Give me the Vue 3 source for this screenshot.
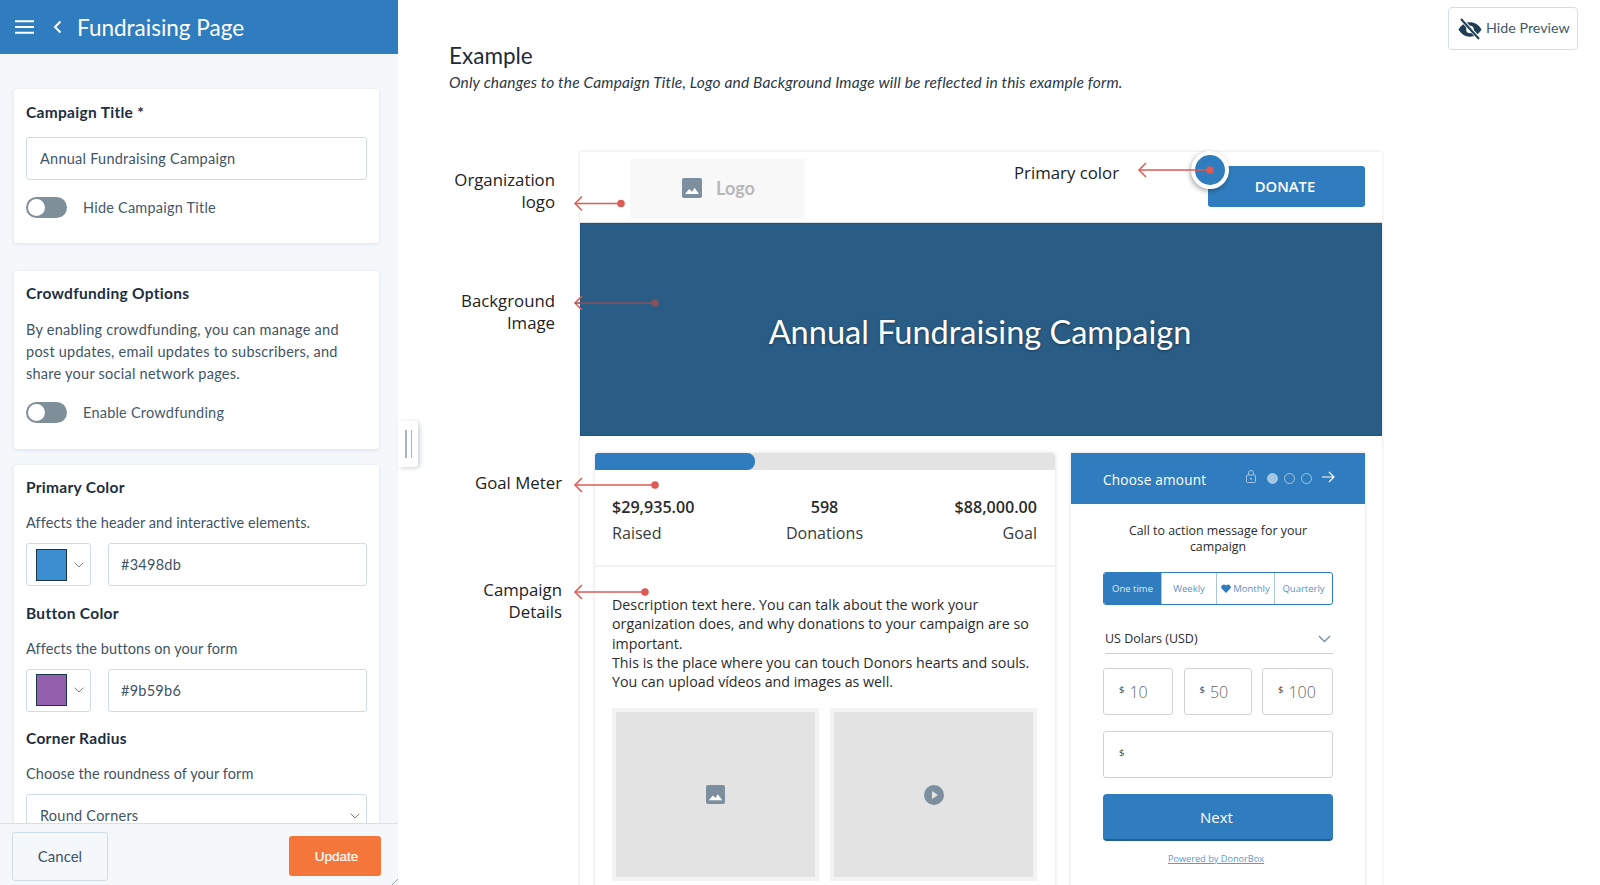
<template>
  <div class="page">
    <aside class="sidebar">
      <header class="side_head">
        <svg class="burger" width="19" height="14" viewBox="0 0 19 14"><path d="M0 1.2h19M0 7h19M0 12.800h19" stroke="#fff" stroke-width="2"/></svg>
        <svg class="back" width="9" height="14" viewBox="0 0 9 14"><path d="M7.500 1.500 2 7l5.500 5.500" fill="none" stroke="#fff" stroke-width="2"/></svg>
        <h1>Fundraising Page</h1>
      </header>

      <div class="side_scroll">
        <section class="card card_title">
          <h3>Campaign Title *</h3>
          <div class="input">Annual Fundraising Campaign</div>
          <div class="toggle_row"><span class="toggle"></span><span>Hide Campaign Title</span></div>
        </section>

        <section class="card card_crowd">
          <h3>Crowdfunding Options</h3>
          <p>By enabling crowdfunding, you can manage and post updates, email updates to subscribers, and share your social network pages.</p>
          <div class="toggle_row"><span class="toggle"></span><span>Enable Crowdfunding</span></div>
        </section>

        <section class="card card_colors">
          <template v-for="c in colors" :key="c.title">
            <h3>{{ c.title }}</h3>
            <p class="hint">{{ c.hint }}</p>
            <div class="color_row">
              <div class="swatch_box">
                <span class="swatch" :style="{ background: c.swatch }"></span>
                <svg width="10" height="6" viewBox="0 0 10 6"><path d="M.7.7 5 5l4.300-4.300" fill="none" stroke="#71838f" stroke-width="1"/></svg>
              </div>
              <div class="input hex">{{ c.value }}</div>
            </div>
          </template>
          <h3>Corner Radius</h3>
          <p class="hint">Choose the roundness of your form</p>
          <div class="input select">
            Round Corners
            <svg width="10" height="6" viewBox="0 0 10 6"><path d="M.7.7 5 5l4.300-4.300" fill="none" stroke="#71838f" stroke-width="1"/></svg>
          </div>
        </section>
      </div>

      <footer class="side_foot">
        <button type="button" class="btn_cancel">Cancel</button>
        <button type="button" class="btn_update">Update</button>
        <svg class="grip" width="6" height="6" viewBox="0 0 6 6"><path d="M0 6 6 0" stroke="#9aa7b2" stroke-width="1"/></svg>
      </footer>
    </aside>

    <div class="handle"><i></i><i></i></div>

    <main class="main">
      <div class="main_top">
        <div>
          <h2>Example</h2>
          <p class="note">Only changes to the Campaign Title, Logo and Background Image will be reflected in this example form.</p>
        </div>
        <button type="button" class="btn_preview">
          <svg width="24" height="22" viewBox="0 0 24 22">
            <path d="M.5 11.500C3.500 6.500 7.500 4.300 12 4.300s8.500 2.200 11.500 7.200c-3 5-7 7.200-11.500 7.200S3.500 16.500.5 11.500Z" fill="#1d3d55"/>
            <circle cx="12" cy="11.500" r="3.800" fill="#fff"/>
            <path d="M3.500 1.500 21 20.500" stroke="#fff" stroke-width="4"/>
            <path d="M3 1 21 21" stroke="#1d3d55" stroke-width="2"/>
          </svg>
          <span>Hide Preview</span>
        </button>
      </div>

      <div class="preview">
        <div class="pv_head">
          <div class="logo_box">
            <svg width="20" height="20" viewBox="0 0 20 20"><rect width="20" height="20" rx="2" fill="#7c8f9e"/><path d="M3 16l4.200-5 2.800 2.800 2.500-4 4.500 6.200Z" fill="#fff"/></svg>
            <span>Logo</span>
          </div>
          <button type="button" class="btn_donate">DONATE</button>
          <span class="color_dot"></span>
        </div>

        <div class="hero">Annual Fundraising Campaign</div>

        <div class="pv_body">
          <div class="goal">
            <div class="bar"><div class="bar_fill" :style="{ width: raisedPct + '%' }"></div></div>
            <div class="stats">
              <div v-for="s in stats" :key="s.label" class="stat">
                <b>{{ s.value }}</b>
                <span>{{ s.label }}</span>
              </div>
            </div>
            <div class="details">
              <p>Description text here. You can talk about the work your organization does, and why donations to your campaign are so important.<br>This is the place where you can touch Donors hearts and souls.<br>You can upload vídeos and images as well.</p>
              <div class="media">
                <div class="media_item">
                  <svg width="19" height="19" viewBox="0 0 20 20"><rect width="20" height="20" rx="2" fill="#7c8f9e"/><path d="M3 16l4.200-5 2.800 2.800 2.500-4 4.500 6.200Z" fill="#fff"/></svg>
                </div>
                <div class="media_item">
                  <svg width="20" height="20" viewBox="0 0 20 20"><circle cx="10" cy="10" r="10" fill="#7c8f9e"/><path d="M8 6l6 4-6 4Z" fill="#e3e3e3"/></svg>
                </div>
              </div>
            </div>
          </div>

          <div class="form">
            <div class="form_head">
              <span class="fh_title">Choose amount</span>
              <svg class="lock" width="10" height="13" viewBox="0 0 10 13"><path d="M2.500 5V3a2.500 2.500 0 0 1 5 0v2" fill="none" stroke="#a5c6e2"/><rect x=".5" y="5" width="9" height="7.500" rx="1" fill="none" stroke="#a5c6e2"/><circle cx="5" cy="8.700" r="1" fill="#a5c6e2"/></svg>
              <span class="step on"></span><span class="step"></span><span class="step"></span>
              <svg class="next_arrow" width="13" height="12" viewBox="0 0 13 12"><path d="M0 6h12M7 1l5 5-5 5" fill="none" stroke="#fff" stroke-width="1.200"/></svg>
            </div>
            <div class="form_body">
              <p class="cta">Call to action message for your campaign</p>
              <div class="tabs">
                <span class="tab active">One time</span>
                <span class="tab">Weekly</span>
                <span class="tab"><svg width="10" height="9" viewBox="0 0 10 9"><path d="M5 9 .8 4.700A2.500 2.500 0 0 1 5 1.600a2.500 2.500 0 0 1 4.200 3.100Z" fill="#2f7dbf"/></svg> Monthly</span>
                <span class="tab">Quarterly</span>
              </div>
              <div class="currency">
                US Dolars (USD)
                <svg width="13" height="8" viewBox="0 0 13 8"><path d="M1 1l5.500 5.500L12 1" fill="none" stroke="#7c8f9e" stroke-width="1.400"/></svg>
              </div>
              <div class="amounts">
                <div v-for="a in amounts" :key="a" class="amount"><small>$</small>{{ a }}</div>
              </div>
              <div class="amount custom"><small>$</small></div>
              <button type="button" class="btn_next">Next</button>
              <a class="powered">Powered by DonorBox</a>
            </div>
          </div>
        </div>
      </div>
    </main>

    <!-- callouts -->
    <div v-for="l in labels" :key="l.text" class="callout" :style="{ top: l.top + 'px', right: l.right + 'px' }">{{ l.text }}</div>
    <svg class="arrows" width="1600" height="885" viewBox="0 0 1600 885">
      <g v-for="a in arrows" :key="a.y" fill="none" stroke-width="1.500">
        <path :d="`M${a.tip + 7} ${a.y - 7} ${a.tip} ${a.y}l7 7`" stroke="#dd5b55"/>
        <path :d="`M${a.tip} ${a.y}H${a.dot}`" :stroke="a.color"/>
        <circle :cx="a.dot" :cy="a.y" r="3.800" :fill="a.color" stroke="none"/>
      </g>
    </svg>
  </div>
</template>

<script setup>
const raisedPct = 34.8

const colors = [
  { title: 'Primary Color', hint: 'Affects the header and interactive elements.', value: '#3498db', swatch: '#3b8fd1' },
  { title: 'Button Color', hint: 'Affects the buttons on your form', value: '#9b59b6', swatch: '#9360ad' }
]

const stats = [
  { value: '$29,935.00', label: 'Raised' },
  { value: '598', label: 'Donations' },
  { value: '$88,000.00', label: 'Goal' }
]

const amounts = [10, 50, 100]

const labels = [
  { text: 'Organization\nlogo', top: 169, right: 1045 },
  { text: 'Background\nImage', top: 290, right: 1045 },
  { text: 'Primary color', top: 162, right: 481 },
  { text: 'Goal Meter', top: 472, right: 1038 },
  { text: 'Campaign\nDetails', top: 579, right: 1038 }
]

const arrows = [
  { tip: 575, dot: 621, y: 203.5, color: '#dd5b55' },
  { tip: 575, dot: 655, y: 303, color: '#85525c' },
  { tip: 1139, dot: 1210, y: 170, color: '#dd5b55' },
  { tip: 575, dot: 655, y: 485, color: '#dd5b55' },
  { tip: 575, dot: 645, y: 592, color: '#dd5b55' }
]
</script>

<style>
html, body { margin: 0; background: #fff; }
</style>

<style scoped>
* { box-sizing: border-box; }

.page {
  position: relative;
  display: flex;
  width: 1600px;
  height: 885px;
  overflow: hidden;
  font-family: Lato, "Open Sans", sans-serif;
  color: #1c2e40;
  background: #fff;
}

/* sidebar */
.sidebar {
  display: flex;
  flex-direction: column;
  flex: none;
  width: 398px;
  height: 885px;
  background: #f5f8fb;
}
.side_head {
  display: flex;
  align-items: center;
  flex: none;
  height: 54px;
  padding-left: 15px;
  background: #2f7dbf;
}
.side_head h1 {
  margin: 0 0 0 15px;
  font-size: 22.5px;
  font-weight: 400;
  color: #fff;
}
.back { margin-left: 19px; }

.side_scroll {
  flex: 1;
  min-height: 0;
  overflow: hidden;
  padding: 35px 19px 0 14px;
}
.card {
  padding: 12px 12px;
  background: #fff;
  border-radius: 3px;
  box-shadow: 0 1px 4px rgba(60, 100, 140, .14);
}
.card h3 {
  margin: 0;
  font-size: 15.5px;
  line-height: 20px;
  font-weight: 700;
  letter-spacing: .3px;
  color: #1c2e40;
}
.card p {
  margin: 0;
  font-size: 14.5px;
  line-height: 22px;
  letter-spacing: .25px;
  color: #3f5464;
}
.card_title { height: 154px; margin-bottom: 28px; }
.card_title h3 { margin-top: 1px; }
.card_title .toggle_row { margin-top: 17px; }
.card_crowd { height: 178px; margin-bottom: 16px; }
.card_crowd p { margin-top: 16px; }
.card_crowd .toggle_row { margin-top: 17px; }

.input {
  display: flex;
  align-items: center;
  height: 43px;
  padding: 0 13px;
  font-size: 14.5px;
  letter-spacing: .25px;
  color: #3f5464;
  background: #fff;
  border: 1px solid #cfdce6;
  border-radius: 3px;
}
.card_title .input { margin-top: 15px; }

.toggle_row {
  display: flex;
  align-items: center;
  gap: 16px;
  margin-top: 16px;
  font-size: 14.5px;
  letter-spacing: .22px;
  color: #44596b;
}
.toggle {
  position: relative;
  width: 41px;
  height: 21px;
  background: #7f8f99;
  border-radius: 11px;
}
.toggle::after {
  content: "";
  position: absolute;
  top: 2px;
  left: 2px;
  width: 17px;
  height: 17px;
  background: #fff;
  border-radius: 50%;
}

.card_colors .hint { margin-top: 15px; letter-spacing: .08px; }
.color_row {
  display: flex;
  gap: 17px;
  margin: 9px 0 16.500px;
}
.swatch_box {
  display: flex;
  align-items: center;
  gap: 7px;
  width: 65px;
  height: 43px;
  padding-left: 9px;
  background: #fff;
  border: 1px solid #cfdce6;
  border-radius: 3px;
}
.swatch {
  width: 31px;
  height: 32px;
  border: 1px solid #1d3548;
}
.hex { flex: 1; padding-left: 12px; }
.select {
  justify-content: space-between;
  margin-top: 9px;
  padding-right: 6px;
}

.side_foot {
  position: relative;
  display: flex;
  align-items: center;
  justify-content: space-between;
  flex: none;
  height: 62px;
  padding: 3px 17px 0 12px;
  background: #f5f8fb;
  border-top: 1px solid #d5e0e9;
}
.btn_cancel {
  width: 96px;
  height: 49px;
  font: 15px Lato, sans-serif;
  color: #3f5464;
  background: #f5f8fb;
  border: 1px solid #cfdce6;
  border-radius: 3px;
}
.btn_update {
  width: 92px;
  height: 40px;
  padding: 0 0 0 3px;
  font: 400 13.5px "Liberation Sans", Arial, sans-serif;
  -webkit-text-stroke: .2px #fff;
  color: #fff;
  background: #f5763b;
  border: 0;
  border-radius: 3px;
}
.grip {
  position: absolute;
  right: 0;
  bottom: 0;
}

.handle {
  display: flex;
  align-items: center;
  gap: 4px;
  flex: none;
  align-self: flex-start;
  width: 20px;
  height: 46px;
  margin-top: 421px;
  padding-left: 7px;
  background: #fff;
  border-radius: 0 4px 4px 0;
  box-shadow: 2px 1px 4px rgba(60, 80, 100, .25);
}
.handle i {
  width: 1.500px;
  height: 28px;
  background: #aab4bc;
}

/* main */
.main {
  flex: 1;
  min-width: 0;
  margin-left: -20px;
  height: 885px;
  overflow: hidden;
}
.main_top {
  display: flex;
  justify-content: space-between;
  align-items: flex-start;
  height: 152px;
  padding: 7px 22px 0 51px;
}
.main_top h2 {
  margin: 35px 0 0;
  font-size: 22.5px;
  line-height: 28px;
  font-weight: 400;
  color: #1d2b38;
}
.note {
  margin: 2px 0 0;
  font-size: 15.5px;
  line-height: 20px;
  font-style: italic;
  letter-spacing: .16px;
  color: #2a3947;
}
.btn_preview {
  display: flex;
  align-items: center;
  gap: 5px;
  width: 130px;
  height: 43px;
  padding: 0 0 0 9px;
  font: 14.3px Lato, sans-serif;
  color: #44596b;
  background: #fff;
  border: 1px solid #d3dee7;
  border-radius: 4px;
}
.btn_preview span { margin: -3px 0 0 -1px; }

.preview {
  width: 802px;
  margin-left: 182px;
  font-family: "Open Sans", sans-serif;
  color: #2b2b2b;
  box-shadow: 0 0 3px rgba(0, 0, 0, .14);
}
.pv_head {
  position: relative;
  display: flex;
  justify-content: space-between;
  height: 71px;
  padding: 7px 17px 0 50px;
  border-bottom: 1px solid #ddd;
}
.logo_box {
  display: flex;
  align-items: center;
  gap: 14px;
  width: 175px;
  height: 59px;
  padding: 0 0 2px 52px;
  font: 700 18px Lato, sans-serif;
  color: #b8b8b8;
  background: #f8f8f8;
}
.btn_donate {
  width: 157px;
  height: 41px;
  margin-top: 7px;
  padding: 0 3px 2px 0;
  font: 600 14.8px "Open Sans", sans-serif;
  color: #fff;
  background: #2f7dbf;
  border: 0;
  border-radius: 3px;
}
.color_dot {
  position: absolute;
  left: 611px;
  top: -1px;
  width: 38px;
  height: 38px;
  background: #2f7dbf;
  border: 4px solid #fff;
  border-radius: 50%;
  box-shadow: -1px 2px 5px rgba(0, 0, 0, .35);
}
.hero {
  display: flex;
  align-items: center;
  justify-content: center;
  height: 213px;
  padding: 4px 2px 0 0;
  font: 400 32.5px Lato, sans-serif;
  color: #fff;
  text-shadow: 0 1px 3px rgba(0, 0, 0, .4);
  background: #2a5d85;
  border: 1px solid #1f5580;
}
.pv_body {
  display: grid;
  grid-template-columns: 460px 294px;
  gap: 16px;
  padding: 17px 17px 0 15px;
}

.goal { box-shadow: 0 0 4px rgba(0, 0, 0, .14); }
.bar {
  height: 17px;
  background: #e3e3e3;
  border-radius: 3px 3px 0 0;
}
.bar_fill {
  height: 100%;
  background: #2f7dbf;
  border-radius: 3px 8px 8px 0;
}
.stats {
  display: flex;
  justify-content: space-between;
  height: 97px;
  padding: 27px 18px 0 17px;
  border-bottom: 2px solid #f1f1f1;
}
.stat {
  display: flex;
  flex-direction: column;
  gap: 6px;
  font-size: 16.100px;
  line-height: 20px;
  color: #3a3a3a;
}
.stat b { font-weight: 600; color: #2b2b2b; }
.stat:nth-child(2) { align-items: center; }
.stat:nth-child(3) { align-items: flex-end; }

.details { padding: 28px 18px 0 17px; }
.details p {
  margin: 0;
  font-size: 14.25px;
  line-height: 19.300px;
  color: #2b2b2b;
}
.media {
  display: grid;
  grid-template-columns: 207px 207px;
  gap: 11px;
  margin-top: 17px;
}
.media_item {
  display: flex;
  align-items: center;
  justify-content: center;
  height: 173px;
  background: #e3e3e3;
  border: 4px solid #f3f3f3;
}

.form {
  height: 460px;
  box-shadow: 0 0 4px rgba(0, 0, 0, .14);
}
.form_head {
  display: flex;
  align-items: center;
  height: 51px;
  padding-left: 32px;
  color: #fff;
  background: #2f7dbf;
}
.fh_title {
  width: 143px;
  padding-top: 2px;
  font-size: 13.6px;
  letter-spacing: .2px;
}
.lock { margin-top: -4px; }
.step {
  width: 11px;
  height: 11px;
  margin-left: 6px;
  border: 1px solid #a5c6e2;
  border-radius: 50%;
}
.step:first-of-type { margin-left: 0; }
.step.on { margin-left: 11px; background: #a5c6e2; }
.next_arrow { margin: -4px 0 0 10px; }

.form_body { padding: 19px 32px 0; }
.cta {
  margin: 0 0 17px;
  font-size: 12.4px;
  line-height: 16px;
  text-align: center;
  color: #2b2b2b;
}
.tabs {
  display: grid;
  grid-template-columns: 57px 55px 58px 1fr;
  height: 33px;
  border: 1px solid #2f7dbf;
  border-radius: 3px;
  overflow: hidden;
}
.tab {
  display: flex;
  align-items: center;
  justify-content: center;
  gap: 2px;
  font-size: 9.5px;
  color: #5b93c4;
  border-left: 1px solid #a9c6df;
  white-space: nowrap;
}
.tab.active {
  color: #dcebf6;
  background: #2f7dbf;
  border-left: 0;
}
.currency {
  display: flex;
  align-items: center;
  justify-content: space-between;
  height: 30px;
  margin: 19px 0 14px 2px;
  padding-right: 2px;
  font-size: 12.5px;
  color: #2b2b2b;
  border-bottom: 1px solid #cfcfcf;
}
.amounts {
  display: grid;
  grid-template-columns: 70px 68px 71px;
  gap: 10.500px;
  margin-bottom: 16px;
}
.amount {
  display: flex;
  align-items: center;
  height: 47px;
  padding-left: 15px;
  font-size: 16px;
  font-weight: 300;
  color: #666;
  border: 1px solid #d2d2d2;
  border-radius: 3px;
}
.amount small {
  margin: -5px 5px 0 0;
  font-size: 9.5px;
  font-weight: 400;
  color: #444;
}
.btn_next {
  display: block;
  width: 100%;
  height: 47px;
  margin-top: 16px;
  padding: 0 3px 0 0;
  font: 400 15px "Open Sans", sans-serif;
  color: #fff;
  background: #2f7dbf;
  border: 0;
  border-bottom: 2px solid #24608f;
  border-radius: 4px;
}
.powered {
  display: block;
  margin: 11px 4px 0 0;
  font-size: 9.2px;
  text-align: center;
  text-decoration: underline;
  color: #5b9ad0;
}

/* callouts */
.callout {
  position: absolute;
  font-family: "Open Sans", sans-serif;
  font-size: 16.800px;
  line-height: 22px;
  text-align: right;
  white-space: pre-line;
  color: #222;
}
.arrows {
  position: absolute;
  inset: 0;
  pointer-events: none;
}
</style>
